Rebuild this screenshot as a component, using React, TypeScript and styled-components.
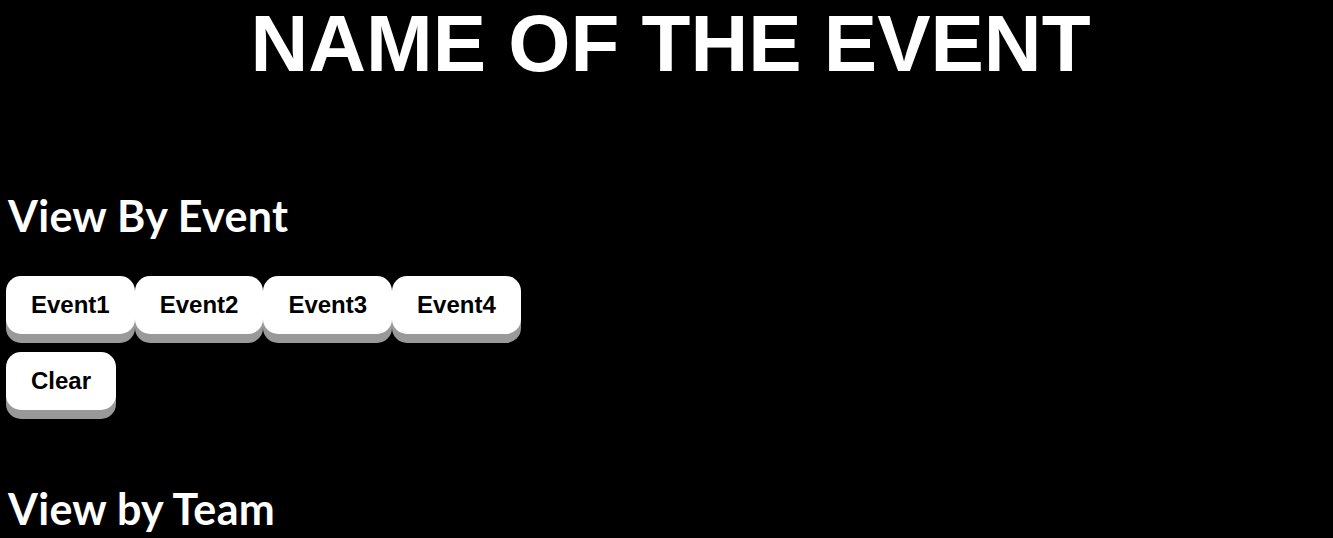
import React from "react";
import styled, { createGlobalStyle } from "styled-components";

const GlobalStyle = createGlobalStyle`
  html, body {
    margin: 0;
    padding: 0;
    background: #000000;
  }
  body {
    font-family: "Liberation Sans", Arial, sans-serif;
    color: #ffffff;
  }
`;

const Page = styled.div`
  display: flex;
  flex-direction: column;
  padding: 0 0 0 8px;
  min-height: 538px;
  overflow: hidden;
`;

const Title = styled.h1`
  margin: 0;
  font-family: "Liberation Sans", Arial, sans-serif;
  font-weight: 700;
  font-size: 80px;
  line-height: 88px;
  text-align: center;
  color: #ffffff;
`;

const SectionTitle = styled.h2<{ $top: number }>`
  margin: ${(p) => p.$top}px 0 0 0;
  font-family: "Comic Sans MS", "Lato", "DejaVu Sans", cursive;
  font-weight: 700;
  font-size: 43px;
  letter-spacing: 0.3px;
  line-height: 50px;
  color: #ffffff;
`;

const ButtonRow = styled.div<{ $top: number }>`
  display: flex;
  flex-wrap: wrap;
  margin: ${(p) => p.$top}px 0 0 -2px;
`;

const PushButton = styled.button`
  font-family: "Liberation Sans", Arial, sans-serif;
  font-weight: 700;
  font-size: 24px;
  line-height: normal;
  color: #000000;
  background: #ffffff;
  border: none;
  border-radius: 15px;
  padding: 15px 25px;
  box-shadow: 0 9px #999999;
  cursor: pointer;
  outline: none;
`;

const events = ["Event1", "Event2", "Event3", "Event4"];

export default function App() {
  return (
    <>
      <GlobalStyle />
      <Page>
        <Title>NAME OF THE EVENT</Title>
        <SectionTitle $top={103}>View By Event</SectionTitle>
        <ButtonRow $top={35}>
          {events.map((e) => (
            <PushButton key={e}>{e}</PushButton>
          ))}
        </ButtonRow>
        <ButtonRow $top={18}>
          <PushButton>Clear</PushButton>
        </ButtonRow>
        <SectionTitle $top={74}>View by Team</SectionTitle>
      </Page>
    </>
  );
}
